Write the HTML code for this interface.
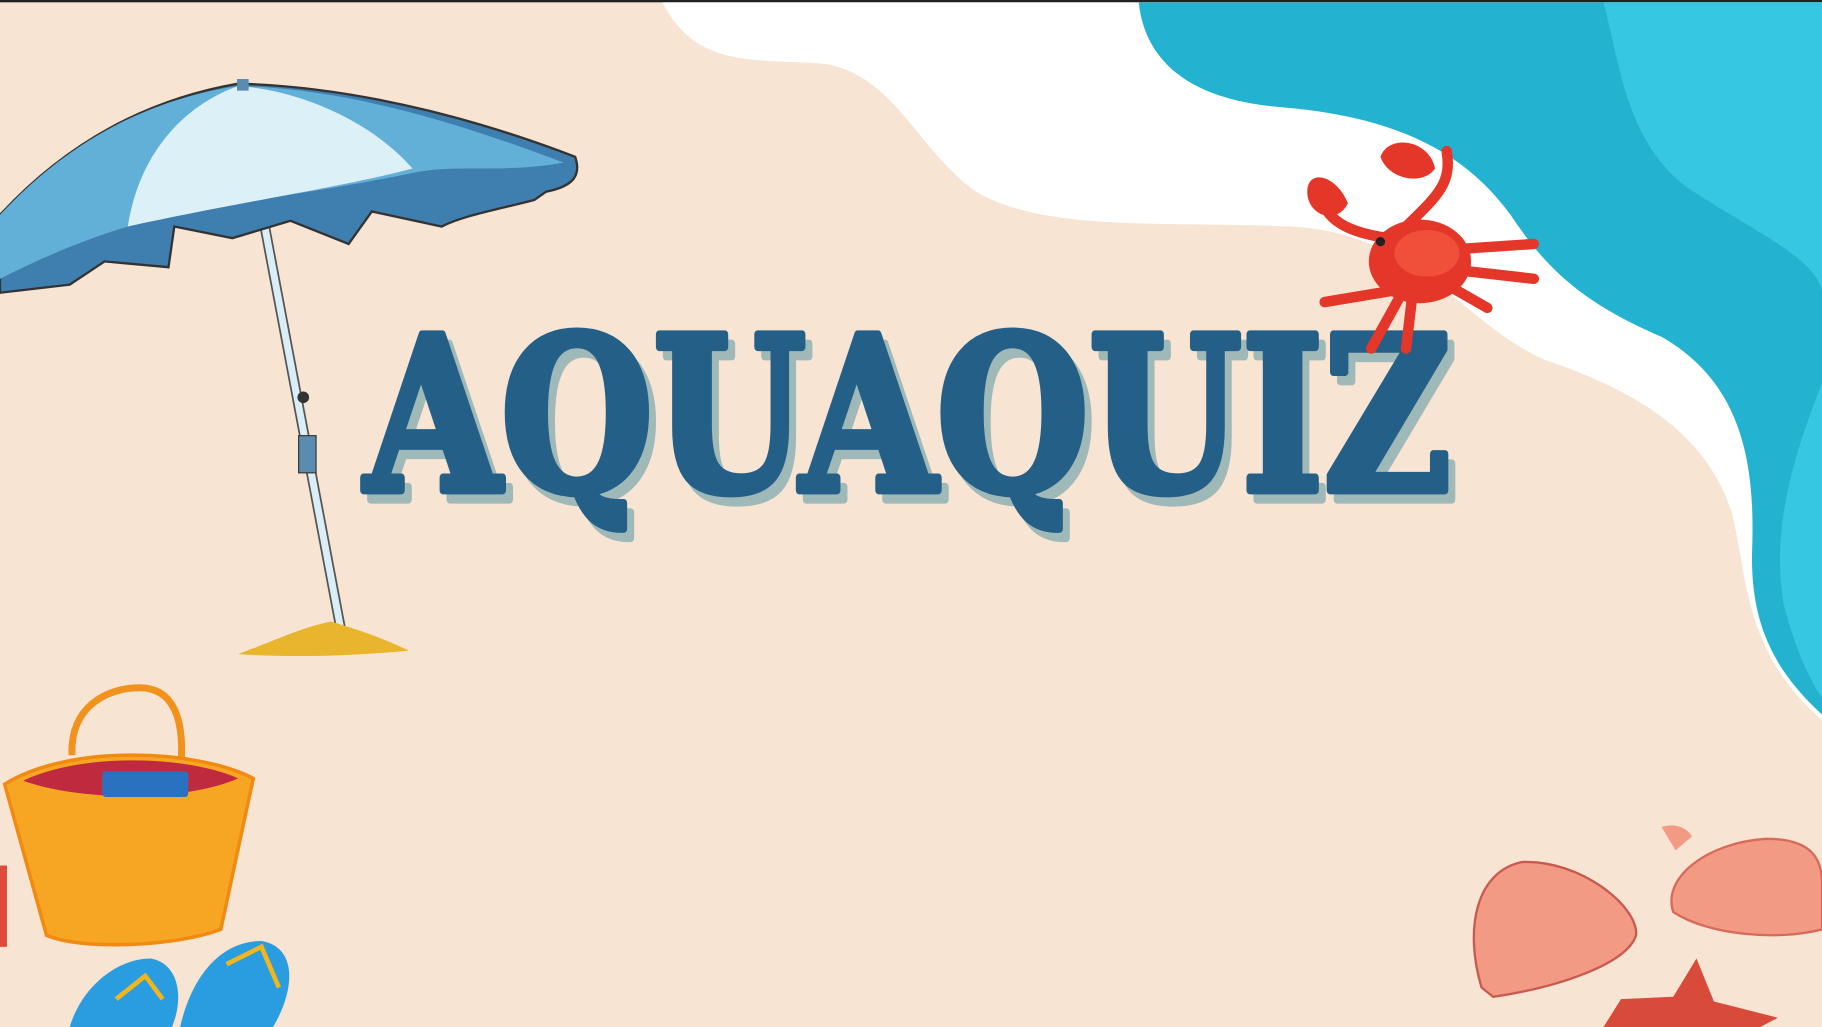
<!DOCTYPE html>
<html><head><meta charset="utf-8"><style>
html,body{margin:0;padding:0;width:1822px;height:1027px;overflow:hidden;background:#f7e4d2}
svg{display:block}
</style></head><body>
<svg width="1822" height="1027" viewBox="0 0 1568 884" preserveAspectRatio="none" xmlns="http://www.w3.org/2000/svg">
<rect width="1568" height="884" fill="#f7e4d2"/>
<rect width="1568" height="2" fill="#222"/>
<path d="M570 2 C600 60 650 50 710 55 C770 65 790 130 840 165 C900 200 1000 190 1110 195 C1220 200 1260 280 1330 310 C1420 340 1470 380 1490 440 C1505 500 1500 560 1568 620 L1568 2 Z" fill="#ffffff"/>
<path d="M980 2 C985 50 1020 85 1100 92 C1200 100 1260 130 1300 185 C1330 230 1360 260 1430 290 C1500 330 1510 400 1508 470 C1505 540 1530 580 1568 615 L1568 2 Z" fill="#23b2cf"/>
<path d="M1380 2 C1395 60 1400 120 1450 160 C1510 200 1560 220 1568 250 L1568 2 Z M1568 330 C1540 400 1525 460 1535 520 C1545 560 1560 590 1568 600 Z" fill="#36c8e2"/>
<!-- umbrella -->
<g>
<path d="M226 185 L293 540" stroke="#555" stroke-width="9"/>
<path d="M226 185 L293 540" stroke="#d9eef7" stroke-width="6"/>
<circle cx="261" cy="342" r="5" fill="#333"/>
<rect x="257" y="375" width="15" height="32" fill="#5a8bb0" stroke="#333"/>
<path d="M205 563 C240 550 260 540 285 535 C300 540 320 545 352 560 C300 565 250 566 205 563Z" fill="#e8b52c"/>
<path d="M205 72 C320 75 430 110 495 135 C500 150 495 160 470 165 L460 172 C430 180 400 185 380 195 L320 182 L300 210 L250 190 L200 205 L150 195 L145 230 L90 225 L60 245 L0 252 L0 185 C60 120 130 85 205 72Z" fill="#3f7faf" stroke="#333" stroke-width="2"/>
<path d="M205 74 C290 76 380 100 485 140 C430 150 390 140 350 150 C250 170 150 180 110 195 C60 210 20 230 0 240 L0 185 C60 120 130 85 205 74Z" fill="#62afd8"/>
<path d="M205 74 C260 78 320 105 355 145 C300 160 200 175 110 195 C120 130 160 90 205 74Z" fill="#dcf0f8"/>
<rect x="204" y="68" width="10" height="10" fill="#5a8bb0"/>
</g>
<!-- title -->
<g font-family="'DejaVu Serif','Liberation Serif',serif" font-weight="bold" font-size="184">
<text x="320" y="430" fill="#9fb8b8" stroke="#9fb8b8" stroke-width="7" stroke-linejoin="round" textLength="935" lengthAdjust="spacingAndGlyphs">AQUAQUIZ</text>
<text x="314" y="422" fill="#245f88" stroke="#245f88" stroke-width="7" stroke-linejoin="round" textLength="935" lengthAdjust="spacingAndGlyphs">AQUAQUIZ</text>
</g>
<!-- crab -->
<g>
<path d="M1195 205 C1160 200 1140 190 1135 165 M1205 200 C1235 170 1250 160 1245 130 M1245 215 L1320 210 M1250 232 L1320 240 M1245 245 L1280 265 M1200 250 L1140 260 M1205 255 L1180 300 M1215 258 L1210 300" fill="none" stroke="#e5362a" stroke-width="9" stroke-linecap="round"/>
<ellipse cx="1222" cy="225" rx="44" ry="36" fill="#e5362a"/>
<ellipse cx="1228" cy="218" rx="28" ry="20" fill="#f0503a"/>
<path d="M1125 165 C1125 145 1150 150 1160 175 C1150 195 1125 185 1125 165Z" fill="#e5362a"/>
<path d="M1188 135 C1195 115 1230 120 1235 145 C1225 160 1195 155 1188 135Z" fill="#e5362a"/>
<circle cx="1188" cy="208" r="4" fill="#222"/>
</g>
<!-- basket -->
<path d="M62 650 C60 610 90 592 120 592 C150 592 158 620 156 655" fill="none" stroke="#f0921c" stroke-width="6"/>
<path d="M4 675 C60 640 170 645 218 670 L190 800 C150 815 70 818 40 805 Z" fill="#f6a623" stroke="#f08a10" stroke-width="3"/>
<path d="M20 672 C70 648 160 650 205 670 C160 690 70 690 20 672Z" fill="#c02a3f"/>
<rect x="88" y="664" width="74" height="22" rx="3" fill="#2a72c0"/>
<rect x="0" y="745" width="6" height="70" fill="#e04a3a"/>
<path d="M60 884 C70 850 100 825 130 825 C155 830 158 860 148 884Z" fill="#2a9de0"/>
<path d="M155 884 C165 840 190 810 225 810 C255 815 255 850 235 884Z" fill="#2a9de0"/>
<path d="M100 860 L125 840 L140 860 M195 830 L225 815 L240 850" stroke="#f2b51c" stroke-width="4" fill="none"/>
<!-- shells -->
<path d="M1275 850 C1260 800 1270 750 1310 742 C1360 740 1410 780 1408 805 C1400 830 1340 850 1285 858Z" fill="#f39a84" stroke="#c85a50" stroke-width="2"/>
<path d="M1440 785 C1430 755 1470 725 1520 722 C1560 722 1568 740 1568 760 L1568 800 C1530 810 1470 805 1440 785Z" fill="#f39a84" stroke="#d86a5a" stroke-width="2"/>
<path d="M1430 712 C1440 708 1452 712 1456 720 L1442 732Z" fill="#f39a84"/>
<path d="M1380 884 L1395 860 L1440 858 L1460 825 L1475 862 L1530 876 L1515 884Z" fill="#d84a3a"/>
</svg>
</body></html>
